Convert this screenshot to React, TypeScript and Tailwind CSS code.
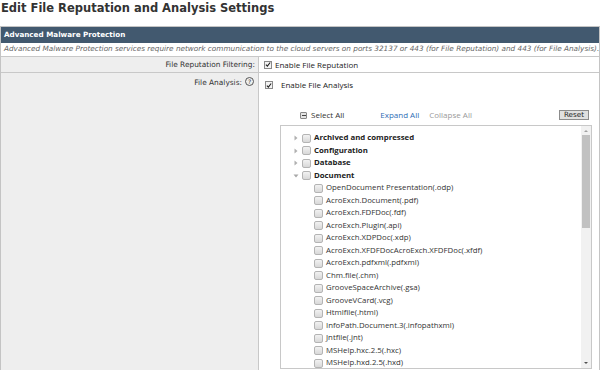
import React from "react";

const F = { fontFamily: '"DejaVu Sans", Verdana, sans-serif' };
const S = { fontFamily: '"Open Sans", "Noto Sans", sans-serif' };

function CheckedBox() {
  return (
    <span className="inline-flex h-[8px] w-[8px] items-center justify-center border border-[#8a8a8a] bg-[#f4f4f4]">
      <svg width="7" height="7" viewBox="0 0 7 7">
        <path d="M1 3.6 L2.8 5.4 L6 1.2" stroke="#222" strokeWidth="1.3" fill="none" />
      </svg>
    </span>
  );
}

function Box() {
  return (
    <span className="inline-block h-[9px] w-[9px] shrink-0 rounded-[2px] border border-[#b4b4b4] bg-gradient-to-b from-[#f2f2f2] to-[#d8d8d8]" />
  );
}

function Arrow({ open }: { open?: boolean }) {
  return open ? (
    <svg width="6" height="6" viewBox="0 0 6 6" className="mr-[3px]">
      <path d="M0.5 1.5 L5.5 1.5 L3 4.5 Z" fill="#a8a8a8" />
    </svg>
  ) : (
    <svg width="6" height="6" viewBox="0 0 6 6" className="mr-[3px]">
      <path d="M1.5 0.5 L4.5 3 L1.5 5.5 Z" fill="#b0b0b0" />
    </svg>
  );
}

const groups = ["Archived and compressed", "Configuration", "Database"];
const docs = [
  "OpenDocument Presentation(.odp)",
  "AcroExch.Document(.pdf)",
  "AcroExch.FDFDoc(.fdf)",
  "AcroExch.Plugin(.api)",
  "AcroExch.XDPDoc(.xdp)",
  "AcroExch.XFDFDocAcroExch.XFDFDoc(.xfdf)",
  "AcroExch.pdfxml(.pdfxml)",
  "Chm.file(.chm)",
  "GrooveSpaceArchive(.gsa)",
  "GrooveVCard(.vcg)",
  "Htmlfile(.html)",
  "InfoPath.Document.3(.infopathxml)",
  "Jntfile(.jnt)",
  "MSHelp.hxc.2.5(.hxc)",
  "MSHelp.hxd.2.5(.hxd)",
];

export default function App() {
  return (
    <div className="h-[370px] w-[600px] overflow-hidden bg-white text-[#333]" style={F}>
      <div className="h-[26px] pl-[1px] text-[11.5px] font-bold leading-[16px] text-[#333]">
        Edit File Reputation and Analysis Settings
      </div>
      <div className="border border-[#c4c4c4]">
        <div className="flex h-[16px] items-center bg-[#42596f] pl-[3px] text-[7.2px] font-bold text-white">
          Advanced Malware Protection
        </div>
        <div className="flex h-[14px] items-center whitespace-nowrap border-b border-[#c8c8c8] pl-[3px] text-[7.3px] italic text-[#666]">
          Advanced Malware Protection services require network communication to the cloud servers on ports 32137 or 443 (for File Reputation) and 443 (for File Analysis).
        </div>
        <div className="grid grid-cols-[258px_1fr] border-b border-[#c8c8c8]">
          <div className="flex h-[15px] items-center justify-end border-r border-[#c8c8c8] bg-[#eeeeee] pr-[3px] text-[7.4px] text-[#333]">
            File Reputation Filtering:
          </div>
          <div className="flex items-center pl-[5px] text-[8px] text-[#222]" style={S}>
            <CheckedBox />
            <span className="ml-[3px]">Enable File Reputation</span>
          </div>
        </div>
        <div className="grid h-[300px] grid-cols-[258px_1fr]">
          <div className="flex items-start justify-end border-r border-[#c8c8c8] bg-[#eeeeee] pr-[4px] pt-[4px] text-[7.4px] text-[#333]">
            <span>File Analysis:</span>
            <span className="ml-[3px] flex h-[9px] w-[9px] items-center justify-center rounded-full border border-[#555] text-[6px] leading-none">
              ?
            </span>
          </div>
          <div className="pl-[6px] pt-[6px] text-[8px] text-[#222]" style={S}>
            <div className="flex items-center">
              <CheckedBox />
              <span className="ml-[8px]">Enable File Analysis</span>
            </div>
            <div className="mt-[18px] flex h-[12px] w-[324px] items-center pl-[35px]">
              <span className="flex h-[7px] w-[7px] items-center justify-center rounded-[1px] border border-[#888] bg-[#e4e4e4]">
                <span className="h-[1px] w-[4px] bg-[#444]" />
              </span>
              <span className="ml-[4px] text-[#333]">Select All</span>
              <span className="ml-[36px] text-[#2f6db5]">Expand All</span>
              <span className="ml-[10px] text-[#9a9a9a]">Collapse All</span>
              <span
                className="ml-auto flex h-[10px] w-[30px] items-center justify-center border border-[#8c8c8c] bg-[#e0e0e0] text-[7.2px] text-[#222]"
                style={F}
              >
                Reset
              </span>
            </div>
            <div className="ml-[15px] mt-[4px] flex h-[244px] w-[312px] border border-[#c8c8c8] bg-white">
              <div className="flex-1 overflow-hidden pl-[12px] pt-[6px] text-[7.8px]">
                {groups.map((g) => (
                  <div key={g} className="flex h-[12.5px] items-center">
                    <Arrow />
                    <Box />
                    <span className="ml-[3px] font-bold text-[#222]">{g}</span>
                  </div>
                ))}
                <div className="flex h-[12.5px] items-center">
                  <Arrow open />
                  <Box />
                  <span className="ml-[3px] font-bold text-[#222]">Document</span>
                </div>
                {docs.map((d) => (
                  <div key={d} className="flex h-[12.5px] items-center pl-[21px]">
                    <Box />
                    <span className="ml-[3px] text-[#333]">{d}</span>
                  </div>
                ))}
              </div>
              <div className="flex w-[10px] flex-col items-center bg-[#f1f1f1]">
                <svg width="6" height="9" viewBox="0 0 6 9">
                  <path d="M1 6 L3 4 L5 6 Z" fill="#a0a0a0" />
                </svg>
                <div className="h-[93px] w-[8px] bg-[#c1c1c1]" />
                <div className="flex-1" />
                <svg width="6" height="9" viewBox="0 0 6 9">
                  <path d="M1 3 L3 5 L5 3 Z" fill="#505050" />
                </svg>
              </div>
            </div>
          </div>
        </div>
      </div>
    </div>
  );
}
